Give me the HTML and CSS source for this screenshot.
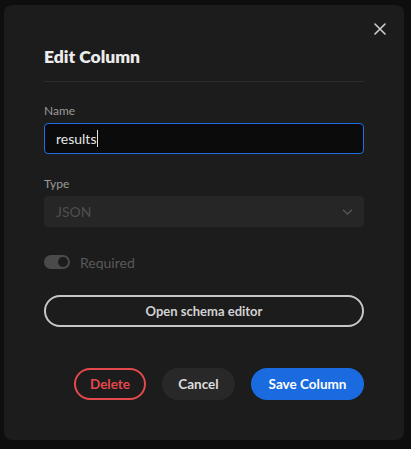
FILE: index.html
```html
<!DOCTYPE html>
<html>
<head>
<meta charset="utf-8">
<link rel="stylesheet" href="styles.css">
</head>
<body>
<div class="dialog">
  <button class="close" aria-label="Close">
    <svg width="12" height="12" viewBox="0 0 12 12"><path d="M1 1L11 11M11 1L1 11" stroke="#cfcfcf" stroke-width="1.6" stroke-linecap="round"/></svg>
  </button>
  <h2 class="title">Edit Column</h2>
  <div class="divider"></div>
  <label class="label">Name</label>
  <div class="input"><span class="value">results</span><span class="caret"></span></div>
  <label class="label type-label">Type</label>
  <div class="select">
    <span>JSON</span>
    <svg width="11" height="6" viewBox="0 0 11 6"><path d="M1 0.8L5.5 5L10 0.8" fill="none" stroke="#555" stroke-width="1.4"/></svg>
  </div>
  <div class="toggle-row">
    <span class="toggle"><span class="knob"></span></span>
    <span class="toggle-label">Required</span>
  </div>
  <button class="schema">Open schema editor</button>
  <div class="actions">
    <button class="btn delete">Delete</button>
    <button class="btn cancel">Cancel</button>
    <button class="btn save">Save Column</button>
  </div>
</div>
</body>
</html>
```
FILE: styles.css
```css
* { box-sizing: border-box; }
html, body { margin: 0; padding: 0; }
body {
  background: #0e0e0e;
  width: 411px;
  height: 449px;
  font-family: "Source Sans Pro", Lato, "Noto Sans", sans-serif;
  padding: 5px 7px 9px 4px;
}
.dialog {
  position: relative;
  background: #1c1c1c;
  border-radius: 8px;
  height: 435px;
  padding: 40px 40px 0 40px;
  display: flex;
  flex-direction: column;
}
.close {
  position: absolute;
  top: 18px;
  right: 18px;
  width: 12px;
  height: 12px;
  padding: 0;
  border: none;
  background: none;
  display: flex;
}
.title {
  margin: 0;
  font-size: 17.5px;
  font-weight: 800;
  color: #ececec;
  line-height: 24px;
}
.divider {
  height: 1px;
  background: #2c2c2c;
  margin: 12px 0 21px;
}
.label {
  font-size: 12px;
  color: #9b9b9b;
  line-height: 16px;
  margin-bottom: 4px;
}
.type-label { margin-top: 22px; }
.input {
  height: 31px;
  border: 1px solid #1f6fe0;
  border-radius: 4px;
  background: #0b0b0b;
  display: flex;
  align-items: center;
  padding-left: 11px;
  font-size: 14px;
  color: #e6e6e6;
}
.caret {
  width: 1px;
  height: 17px;
  background: #e6e6e6;
  margin-left: 1px;
}
.select {
  height: 31px;
  border-radius: 4px;
  background: #262626;
  display: flex;
  align-items: center;
  justify-content: space-between;
  padding: 0 11px 0 12px;
  font-size: 14px;
  color: #4f4f4f;
}
.toggle-row {
  display: flex;
  align-items: center;
  margin-top: 27px;
  height: 16px;
}
.toggle {
  width: 26px;
  height: 14px;
  border-radius: 7px;
  background: #4a4a4a;
  display: flex;
  align-items: center;
  justify-content: flex-end;
  padding-right: 2px;
}
.knob {
  width: 10px;
  height: 10px;
  border-radius: 50%;
  background: #1c1c1c;
}
.toggle-label {
  margin-left: 10px;
  font-size: 14px;
  color: #595959;
}
.schema {
  margin-top: 25px;
  height: 32px;
  border: 2px solid #c6c6c6;
  border-radius: 16px;
  background: transparent;
  color: #d2d2d2;
  font-family: inherit;
  font-size: 13px;
  font-weight: 700;
}
.actions {
  display: flex;
  justify-content: flex-end;
  gap: 16px;
  margin-top: 41px;
}
.btn {
  height: 32px;
  border-radius: 16px;
  font-family: inherit;
  font-size: 13.5px;
  font-weight: 700;
  border: 2px solid transparent;
}
.delete {
  width: 72px;
  border-color: #e5484d;
  background: transparent;
  color: #e5484d;
}
.cancel {
  width: 73px;
  background: #282828;
  color: #dedede;
}
.save {
  width: 113px;
  background: #1a6be0;
  color: #ffffff;
}
```
